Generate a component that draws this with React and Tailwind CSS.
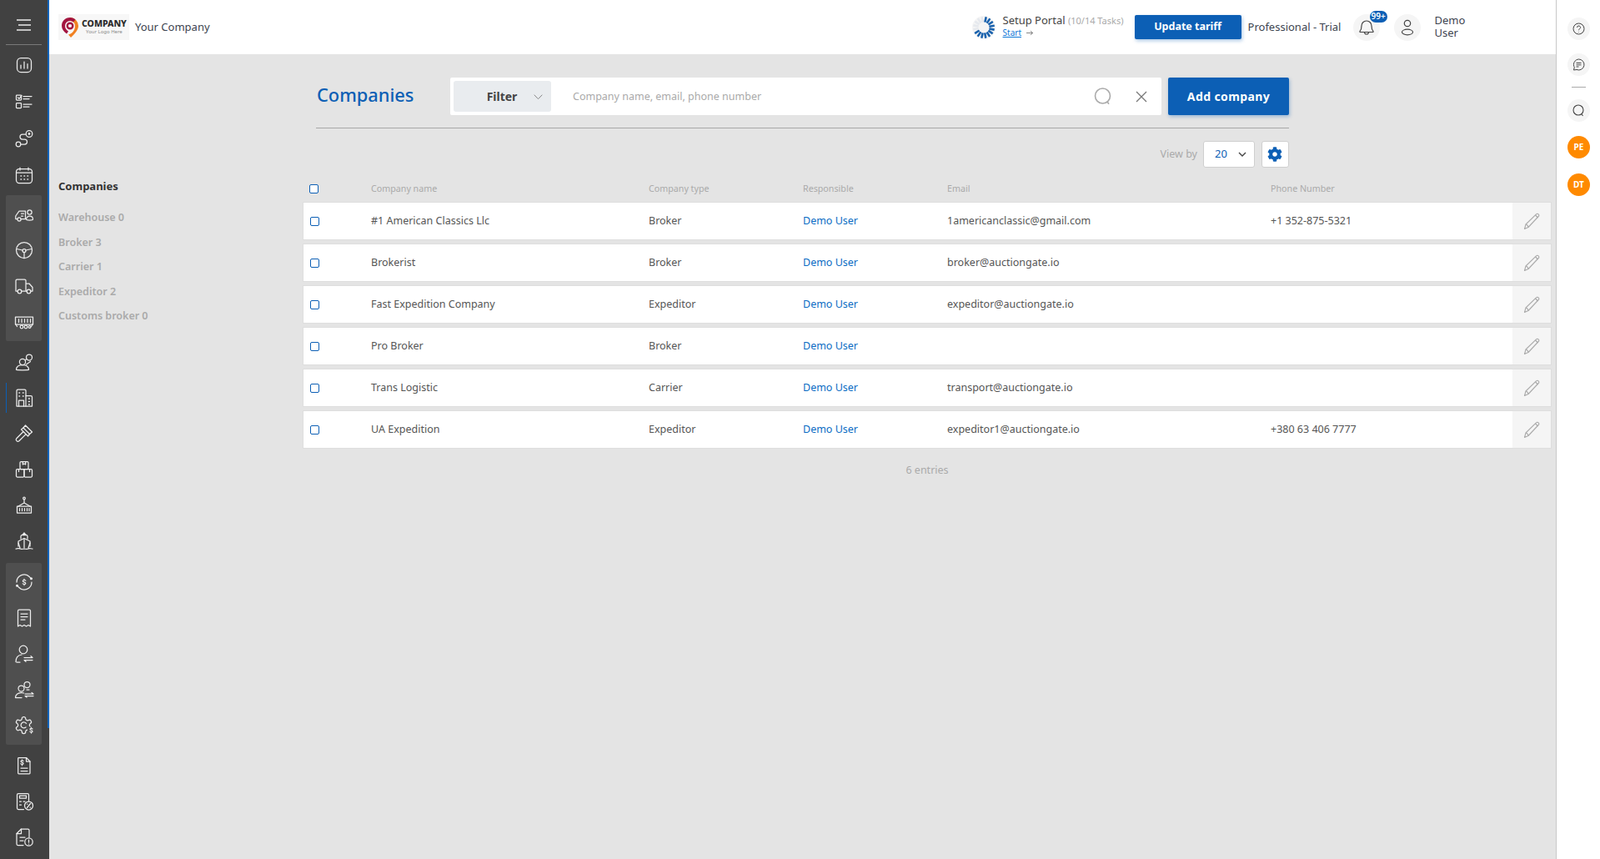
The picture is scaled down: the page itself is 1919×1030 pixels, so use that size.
import React from "react";
import { FaCog } from "react-icons/fa";

const S = ({ children, size = 24, sw = 1.25 }) => (
  <svg width={size} height={size} viewBox="0 0 24 24" fill="none" stroke="#ececec" strokeWidth={sw} strokeLinecap="round" strokeLinejoin="round">
    {children}
  </svg>
);

const icons = {
  chart: <><rect x="3.500" y="3.500" width="17" height="17" rx="4.500" /><path d="M8 12v4M12 8v8M16 10.500V16" /></>,
  tasks: <><rect x="2.500" y="4" width="6" height="6" rx=".8" /><path d="m4.500 7 1.500 1.300L9 4.500" /><rect x="2.500" y="13.500" width="6" height="6" rx=".8" /><path d="M11 5.500h10M11 8.500h7M11 15h10M11 18h7" /></>,
  route: <><circle cx="5" cy="19" r="2.800" /><circle cx="18" cy="6.500" r="3.800" /><circle cx="18" cy="6.500" r=".8" /><path d="M8 19h4.500a3 3 0 0 0 0-6H10a3 3 0 0 1 0-6h3.500" /></>,
  calendar: <><rect x="2.500" y="4.500" width="19" height="17" rx="3.500" /><path d="M7 3v3M17 3v3M3 9h18" /><path d="M8 13h.5M12 13h.5M16 13h.5M8 17h.5M12 17h.5M16 17h.5" strokeWidth="1.500" /></>,
  truckPerson: <><path d="M3.800 17.500H1.800V14L6 8h7.500v9.500H8" /><circle cx="6" cy="18" r="2.100" /><path d="M8.500 11h3M8.500 14h2" /><circle cx="18.500" cy="9.500" r="2.600" /><path d="M14.500 18c0-2.500 2-3.800 4-3.800s4 1.300 4 3.800c0 .7-1 1-4 1s-4-.3-4-1Z" /></>,
  wheel: <><circle cx="12" cy="12" r="9.500" /><circle cx="12" cy="12.500" r="2" /><path d="M3 10.500 10 12M21 10.500 14 12M12 14.500v7" /></>,
  truck: <><path d="M14 18H9M4 18H2V5.500A1.500 1.500 0 0 1 3.500 4H12.500A1.500 1.500 0 0 1 14 5.500V18h1M14 9h4l4 4.500V18h-2" /><circle cx="6.500" cy="18.500" r="2.300" /><circle cx="17.500" cy="18.500" r="2.300" /></>,
  rail: <><path d="M1.500 6h21v9h-21z" /><path d="M5.500 8.500v4M9 8.500v4M12.500 8.500v4M16 8.500v4M19.500 8.500v4" /><path d="M2 15l1.500 2.500M22 15l-1.500 2.500" /><circle cx="9" cy="18" r="1.800" /><circle cx="14" cy="18" r="1.800" /><circle cx="18.500" cy="18" r="1.400" /></>,
  people: <><circle cx="10" cy="12" r="3.600" /><path d="M2.500 21.500c0-4 3-6 7.500-6s7.500 2 7.500 6c0 .4-15 .4-15 0Z" /><circle cx="18" cy="6.500" r="3.500" /><path d="M13.500 9.500l1.500-1M14.500 15l5-3.500" /></>,
  building: <><path d="M3 22V3.500A1.500 1.500 0 0 1 4.500 2h8A1.500 1.500 0 0 1 14 3.500V22Z" /><path d="M14 9.500h6A1.500 1.500 0 0 1 21.500 11V22H14" /><path d="M6 6h.5M10.500 6h.5M6 10h.5M10.500 10h.5M17.500 13h.8M17.500 16.500h.8M17.500 20h.8" strokeWidth="1.600" /><path d="M5.500 22v-7h6v7" /></>,
  gavel: <><path d="m13.500 2 8 8-3 2.500-7.500-7.500Z" /><path d="M11 5 8.500 7l8 8 2-2.500" /><path d="M10.500 10 2.800 17.700a2.200 2.200 0 0 0 3.100 3.100l7.700-7.700" /></>,
  boxes: <><rect x="7" y="2.500" width="10" height="9" rx="1.200" /><path d="M10.300 2.500V6l1.700-1 1.700 1V2.500" /><rect x="2.500" y="11.500" width="9.500" height="9.500" rx="1.200" /><rect x="12" y="11.500" width="9.500" height="9.500" rx="1.200" /><path d="M5.500 11.500v3M18.500 11.500v3" /></>,
  crane: <><circle cx="12" cy="3.500" r="1.300" /><path d="M12 5v4M12 9l-7 4M12 9l7 4" /><rect x="3.500" y="13" width="17" height="8" /><path d="M6.500 15.500v3M9.500 15.500v3M12.500 15.500v3M15.500 15.500v3M18 15.500v3" /></>,
  ship: <><path d="M8 9V6a2 2 0 0 1 2-1.500h4A2 2 0 0 1 16 6v3" /><path d="M10 4.500 12 2l2 2.500" /><path d="M5 18v-6l7-3.500 7 3.500v6" /><path d="M12 9v11M5 14l2 6M19 14l-2 6M2 21c3 0 3-1 5 0s3 0 5 0 3 1 5 0 3 0 5 0" /></>,
  exchange: <><path d="M3 12a9 9 0 0 1 15.500-6.200L20 7.500M21 12a9 9 0 0 1-15.500 6.200L4 16.500" /><circle cx="20.500" cy="7.800" r=".9" fill="#ececec" /><circle cx="3.500" cy="16.200" r=".9" fill="#ececec" /><path d="M13.800 10.200c-.4-.8-3.500-1-3.500.5s3.500 1.200 3.500 2.700-3 1.300-3.500.4M12 8.300v.8M12 14.900v.8" /></>,
  receipt: <><path d="M4.500 3.500A1.500 1.500 0 0 1 6 2h12a1.500 1.500 0 0 1 1.500 1.500V22L17 20.500 14.500 22 12 20.500 9.500 22 7 20.500 4.500 22Z" /><path d="M8 7h8M8 10.500h8M8 14h5" /></>,
  userSwap: <><circle cx="11" cy="7" r="4.800" /><path d="M2 21.500c0-5 3-8 7-8.500M7 22H3" /><path d="M12 16.500h10l-2-1.800M22 19.500H12l2 1.800" /></>,
  usersSwap: <><circle cx="15.500" cy="6" r="3.500" /><circle cx="8.500" cy="10.500" r="3.500" /><path d="M1.500 21.500c0-3.500 3-6 7-6 1 0 2 .2 3 .5M2 21.500h7M15 12h3" /><path d="M13 17h10l-2-1.500M23 19.500H13l2 1.500" /></>,
  gearDollar: (
    <>
      <g transform="translate(-.5 -.5)">
        <path d="M12.220 2h-.44a2 2 0 0 0-2 2v.18a2 2 0 0 1-1 1.730l-.43.250a2 2 0 0 1-2 0l-.15-.08a2 2 0 0 0-2.730.730l-.22.380a2 2 0 0 0 .73 2.730l.15.100a2 2 0 0 1 1 1.720v.510a2 2 0 0 1-1 1.740l-.15.090a2 2 0 0 0-.73 2.730l.22.380a2 2 0 0 0 2.730.730l.15-.08a2 2 0 0 1 2 0l.43.250a2 2 0 0 1 1 1.730V20a2 2 0 0 0 2 2h.44a2 2 0 0 0 2-2v-.18a2 2 0 0 1 1-1.730l.43-.25a2 2 0 0 1 2 0l.15.08a2 2 0 0 0 2.730-.73l.22-.39a2 2 0 0 0-.73-2.730l-.15-.08a2 2 0 0 1-1-1.740v-.5a2 2 0 0 1 1-1.740l.15-.09a2 2 0 0 0 .73-2.730l-.22-.38a2 2 0 0 0-2.730-.73l-.15.08a2 2 0 0 1-2 0l-.43-.25a2 2 0 0 1-1-1.730V4a2 2 0 0 0-2-2z" />
        <path d="M15 10a3.500 3.500 0 1 0-.5 4.500" />
      </g>
      <rect x="16" y="13.500" width="8" height="10" fill="#4f4f4f" stroke="none" />
      <path d="M22 16c-.4-.8-3-1-3 .3s3 1.200 3 2.600-2.700 1.100-3 .3M20.500 14.500v.5M20.500 20.300v.7" />
    </>
  ),
  docDollar: <><path d="M5.500 2.500h9L19 7v14a.8.8 0 0 1-.8.8H5.500a.8.8 0 0 1-.8-.8V3.300a.8.8 0 0 1 .8-.8Z" /><path d="M14.500 2.500V7H19" /><path d="M11 6.500c-.4-.8-3-.9-3 .4s3 1.200 3 2.500-2.700 1.200-3 .3M9.500 5v.8M9.500 11v.8M8 15h8M8 18.500h8" /></>,
  calc: <><path d="M11.500 21.500H5A1.500 1.500 0 0 1 3.500 20V4A1.500 1.500 0 0 1 5 2.500h11A1.500 1.500 0 0 1 17.500 4v7.500" /><rect x="6.500" y="5" width="8" height="3" /><path d="M6.500 12h2M11 12h2M6.500 16h2" /><circle cx="17.500" cy="17" r="5" /><path d="m15.500 19.500 4-5M15.500 15h.5M19 19h.5" /></>,
  docAlert: <><path d="M11 21.500H4.500A1.500 1.500 0 0 1 3 20V7.500L8.500 2h8A1.500 1.500 0 0 1 18 3.500V12" /><path d="M8.500 2v5.500H3M7 12h6M7 16h4" /><circle cx="17.500" cy="17.500" r="4.700" /><path d="M17.500 15v3M17.500 20h.01" /></>,
};

const Item = ({ name, active, h = "h-[43px]" }) => (
  <div className={`relative ${h} flex items-center justify-center`}>
    {active && <span className="absolute left-[7px] top-[3px] h-[36px] w-px bg-[#0c5fb5]" />}
    <S>{icons[name]}</S>
  </div>
);

const Sidebar = () => (
  <aside className="w-[59px] shrink-0 bg-[#414141]">
    <div className="h-[873px] border-r-2 border-[#0c63ba]">
      <div className="flex h-[53px] items-center justify-center pt-[7px]">
        <svg width="20" height="14" viewBox="0 0 20 14" fill="none" stroke="#ececec" strokeWidth="1.300">
          <path d="M1 1h17M3 7h15M1 13h17" />
        </svg>
      </div>
      <div className="mx-[7px] h-px bg-[#7a7a7a]" />
      <div className="pt-[2px]">
        {["chart", "tasks", "route", "calendar"].map((n) => <Item key={n} name={n} h="h-[44px]" />)}
      </div>
      <div className="mx-[7px] mt-[2px] rounded-[2px] bg-[#4f4f4f] py-[1.5px]">
        {["truckPerson", "wheel", "truck", "rail"].map((n) => <Item key={n} name={n} />)}
      </div>
      <div className="mt-[3.5px]">
        <Item name="people" />
        <Item name="building" active />
        {["gavel", "boxes", "crane", "ship"].map((n) => <Item key={n} name={n} />)}
      </div>
      <div className="mx-[7px] mt-[4.5px] rounded-[2px] bg-[#4f4f4f] py-[1.5px]">
        {["exchange", "receipt", "userSwap", "usersSwap", "gearDollar"].map((n) => <Item key={n} name={n} />)}
      </div>
      <div className="mt-[3.5px]">
        {["docDollar", "calc", "docAlert"].map((n) => <Item key={n} name={n} />)}
      </div>
    </div>
  </aside>
);

const Spinner = () => (
  <div className="flex h-[28px] w-[28px] items-center justify-center rounded-full bg-[#f5f5f5]">
    <svg width="28" height="28" viewBox="0 0 28 28">
      {Array.from({ length: 16 }).map((_, i) => (
        <rect key={i} x="12.700" y="1" width="2.600" height="6.500" rx=".4" fill={i >= 11 ? "#e6e9ee" : "#1a62ad"} transform={`rotate(${i * 22.5 + 12} 14 14)`} />
      ))}
    </svg>
  </div>
);

const Logo = () => (
  <div className="flex h-[31px] w-[85px] items-center gap-[3px] bg-[#f7f7f7] pl-[3px]">
    <svg width="22" height="25" viewBox="0 0 22 25" className="shrink-0">
      <path d="M11 1a10 10 0 0 1 10 10c0 5-4 9-9 14l-3-3.500c2-.5 8-3 8-10.500a6 6 0 0 0-6-6Z" fill="#f08122" />
      <path d="M11 1C5 1 1 5.500 1 11c0 4 2.500 7 6 9.500l2-3C6.500 16 5 14 5 11a6 6 0 0 1 6-6c1.500 0 3 .5 4 1.500l2.500-3C16 2 13.500 1 11 1Z" fill="#a3153f" />
      <circle cx="11" cy="11" r="3.300" fill="none" stroke="#a3153f" strokeWidth="2.400" />
    </svg>
    <div className="flex flex-col items-center">
      <span className="text-[10.5px] leading-[11px] font-extrabold text-[#2b2b2b]">COMPANY</span>
      <span className="text-[6px] leading-[8px] text-[#8a8a8a]">Your Logo Here</span>
    </div>
  </div>
);

const Circle = ({ children, className = "h-[32px] w-[32px]" }) => (
  <div className={`flex items-center justify-center rounded-full bg-[#f5f5f5] ${className}`}>{children}</div>
);

const Header = () => (
  <header className="flex h-[65px] shrink-0 items-center bg-white pl-[11px] text-[#444]">
    <Logo />
    <span className="ml-[7px] text-[13px] text-[#3d4450]">Your Company</span>
    <div className="ml-[914px] flex items-center">
      <Spinner />
    </div>
    <div className="mb-[3px] ml-[9px] w-[158px]">
      <div className="text-[13px] leading-[16px] text-[#444]">
        Setup Portal <span className="text-[11px] text-[#aaa]">(10/14 Tasks)</span>
      </div>
      <div className="flex items-center gap-[6px] text-[10px] leading-[13px] text-[#0c77d8]">
        <span className="underline">Start</span>
        <svg width="8" height="7" viewBox="0 0 8 7" fill="none" stroke="#555" strokeWidth=".7"><path d="M0 3.500h7.500M5 1l2.500 2.500L5 6" /></svg>
      </div>
    </div>
    <button className="h-[29px] w-[128px] rounded-[2px] bg-[#0c5fb5] pb-[1px] text-[12.5px] font-bold text-white shadow-[1px_2px_4px_rgba(12,95,181,0.35)]">
      Update tariff
    </button>
    <span className="ml-[8px] w-[126px] text-[13px] text-[#3d4450]">Professional - Trial</span>
    <div className="relative">
      <Circle>
        <svg width="20" height="21" viewBox="0 0 20 21" fill="none" stroke="#444" strokeWidth="1.200" strokeLinejoin="round">
          <path d="M2 15.500c1.500-1.500 2-2.500 2-6.500a6 6 0 0 1 12 0c0 4 .5 5 2 6.500 .3.5 0 1-.5 1h-15c-.5 0-.8-.5-.5-1ZM7.500 16.500a2.500 2.500 0 0 0 5 0" />
        </svg>
      </Circle>
      <span className="absolute top-[-4px] left-[20px] flex h-[14px] w-[21px] items-center justify-center rounded-full bg-[#0c5fb5] text-[10px] font-semibold text-white">99+</span>
    </div>
    <Circle className="ml-[17px] h-[32px] w-[32px]">
      <svg width="16" height="20" viewBox="0 0 16 20" fill="none" stroke="#444" strokeWidth="1.200">
        <circle cx="8" cy="5" r="3.700" />
        <ellipse cx="8" cy="15.500" rx="6.500" ry="3.300" />
      </svg>
    </Circle>
    <div className="ml-[17px] pb-[2px] text-[13px] leading-[15px] text-[#3d4450]">
      <div>Demo</div>
      <div>User</div>
    </div>
  </header>
);

const Check = () => (
  <span className="block h-[11px] w-[11px] rounded-[2px] border border-[#0c5fb5] bg-white" />
);

const rows = [
  ["#1 American Classics Llc", "Broker", "1americanclassic@gmail.com", "+1 352-875-5321"],
  ["Brokerist", "Broker", "broker@auctiongate.io", ""],
  ["Fast Expedition Company", "Expeditor", "expeditor@auctiongate.io", ""],
  ["Pro Broker", "Broker", "", ""],
  ["Trans Logistic", "Carrier", "transport@auctiongate.io", ""],
  ["UA Expedition", "Expeditor", "expeditor1@auctiongate.io", "+380 63 406 7777"],
];

const Pencil = () => (
  <svg width="21" height="21" viewBox="0 0 21 21" fill="none" stroke="#aaa" strokeWidth="1.100" strokeLinejoin="round">
    <path d="M1.500 19.500 3 14 15.500 1.800a1.800 1.800 0 0 1 2.700 0 1.800 1.800 0 0 1 0 2.700L6 17.500Z" />
    <path d="M3 14c1 .2 2.700 2 3 3.500M14.500 3l3 3" />
  </svg>
);

const Table = () => (
  <div className="w-[1498px]">
    <div className="grid h-[41px] grid-cols-[82px_333px_185px_173px_388px_337px] items-center pt-[9px] text-[10.7px] text-[#aaa]">
      <div className="pl-[8px]"><Check /></div>
      <div>Company name</div>
      <div>Company type</div>
      <div>Responsible</div>
      <div>Email</div>
      <div>Phone Number</div>
    </div>
    {rows.map((r) => (
      <div key={r[0]} className="mb-[4px] grid h-[46px] grid-cols-[81px_333px_185px_173px_388px_290px_46px] items-center border border-[#dedede] bg-white text-[12.5px] text-[#555]">
        <div className="pl-[8px]"><Check /></div>
        <div>{r[0]}</div>
        <div>{r[1]}</div>
        <div className="text-[#0c6cc4]">Demo User</div>
        <div>{r[2]}</div>
        <div>{r[3]}</div>
        <div className="flex h-full items-center justify-center bg-[#f5f5f5]"><Pencil /></div>
      </div>
    ))}
    <div className="pt-[13px] text-center text-[12.5px] text-[#aaa]">6 entries</div>
  </div>
);

const Toolbar = () => (
  <div className="ml-[16px] w-[1167px]">
    <div className="flex h-[45px] items-center">
      <h1 className="w-[161px] pb-[3px] pl-px text-[21.8px] font-medium text-[#0c5fb5]">Companies</h1>
      <div className="flex h-[45px] w-[853px] items-center rounded-[2px] bg-white pl-[4px]">
        <div className="relative flex h-[37px] w-[117px] items-center justify-center rounded-[3px] bg-[#e9ecef] pr-[1px] text-[14px] font-bold text-[#444]">
          Filter
          <svg className="absolute right-[10px] top-[16px]" width="11" height="7" viewBox="0 0 11 7" fill="none" stroke="#888" strokeWidth="1"><path d="m.7.700 4.800 5 4.800-5" /></svg>
        </div>
        <span className="ml-[26px] pt-[1px] text-[12.5px] text-[#aaa]">Company name, email, phone number</span>
        <svg className="ml-auto mr-[28px]" width="22" height="22" viewBox="0 0 22 22" fill="none" stroke="#aaa" strokeWidth="1.600">
          <circle cx="10.500" cy="10" r="9" /><path d="m16 17 2 2.800" />
        </svg>
        <svg className="mr-[17px]" width="14" height="14" viewBox="0 0 14 14" fill="none" stroke="#777" strokeWidth="1.300"><path d="m1 1 12 12M13 1 1 13" /></svg>
      </div>
      <button className="ml-[8px] h-[45px] w-[145px] rounded-[2px] bg-[#0c5fb5] pb-[1px] text-[14px] font-bold tracking-[0.4px] text-white shadow-[1px_2px_4px_rgba(12,95,181,0.35)]">
        Add company
      </button>
    </div>
    <div className="mt-[15px] h-px bg-[#a8a8a8]" />
    <div className="mt-[15px] flex h-[32px] items-center justify-end text-[12.5px] text-[#aaa]">
      <span className="pt-[1px]">View by</span>
      <div className="ml-[7px] flex h-[32px] w-[62px] items-center rounded-[3px] border border-[#cfcfcf] bg-white pl-[13px] text-[13px] text-[#0c5fb5]">
        20
        <svg className="ml-[13px]" width="10" height="6" viewBox="0 0 10 6" fill="none" stroke="#444" strokeWidth="1.400"><path d="m1 1 4 4 4-4" /></svg>
      </div>
      <div className="ml-[8px] flex h-[32px] w-[33px] items-center justify-center rounded-[3px] border border-[#cfcfcf] bg-white pr-[1px] text-[#0c5fb5]">
        <FaCog size={18} />
      </div>
    </div>
  </div>
);

const SideList = () => (
  <div className="w-[304px] shrink-0 pl-[11px] pt-[149px] text-[12.5px] font-semibold text-[#aaa]">
    <div className="text-[13px] font-bold leading-[18px] text-[#333]">Companies</div>
    <div className="mt-[20px] leading-[18px]">Warehouse 0</div>
    <div className="mt-[12px] leading-[18px]">Broker 3</div>
    <div className="mt-[11px] leading-[18px]">Carrier 1</div>
    <div className="mt-[12px] leading-[18px]">Expeditor 2</div>
    <div className="mt-[11px] leading-[18px]">Customs broker 0</div>
  </div>
);

const RightPanel = () => (
  <aside className="flex w-[53px] shrink-0 flex-col items-center border-l border-[#c8c8c8] bg-white pt-[21px] pl-px">
    <Circle className="h-[27px] w-[27px]">
      <svg width="15" height="15" viewBox="0 0 15 15" fill="none" stroke="#444" strokeWidth="1"><circle cx="7.500" cy="7.500" r="6.500" /><path d="M5.500 6a2 2 0 1 1 3 1.700c-.7.500-1 .800-1 1.600M7.500 11v.5" /></svg>
    </Circle>
    <Circle className="mt-[16px] h-[27px] w-[27px]">
      <svg width="15" height="15" viewBox="0 0 15 15" fill="none" stroke="#444" strokeWidth="1"><path d="M7.500 1a6.500 6.500 0 1 1-2.500 12.500L1.500 14l.8-3.300A6.500 6.500 0 0 1 7.500 1Z" /><path d="M4.500 5.500h6M4.500 7.800h6M4.500 10h3" /></svg>
    </Circle>
    <div className="mt-[13px] h-px w-[17px] bg-[#aaa]" />
    <Circle className="mt-[14px] h-[27px] w-[27px]">
      <svg width="15" height="15" viewBox="0 0 15 15" fill="none" stroke="#444" strokeWidth="1.100"><circle cx="7" cy="7" r="6" /><path d="m11 12 1.500 2" /></svg>
    </Circle>
    <div className="mt-[17px] flex h-[27px] w-[27px] items-center justify-center rounded-full bg-[#ff8a00] text-[10px] font-bold text-white">PE</div>
    <div className="mt-[18px] flex h-[27px] w-[27px] items-center justify-center rounded-full bg-[#ff8a00] text-[10px] font-bold text-white">DT</div>
  </aside>
);

export default function App() {
  return (
    <div className="flex h-screen overflow-hidden bg-[#e4e4e4] font-['Open_Sans',sans-serif]">
      <Sidebar />
      <div className="flex min-w-0 flex-1 flex-col">
        <Header />
        <main className="flex flex-1">
          <SideList />
          <div className="pt-[28px]">
            <Toolbar />
            <Table />
          </div>
        </main>
      </div>
      <RightPanel />
    </div>
  );
}
